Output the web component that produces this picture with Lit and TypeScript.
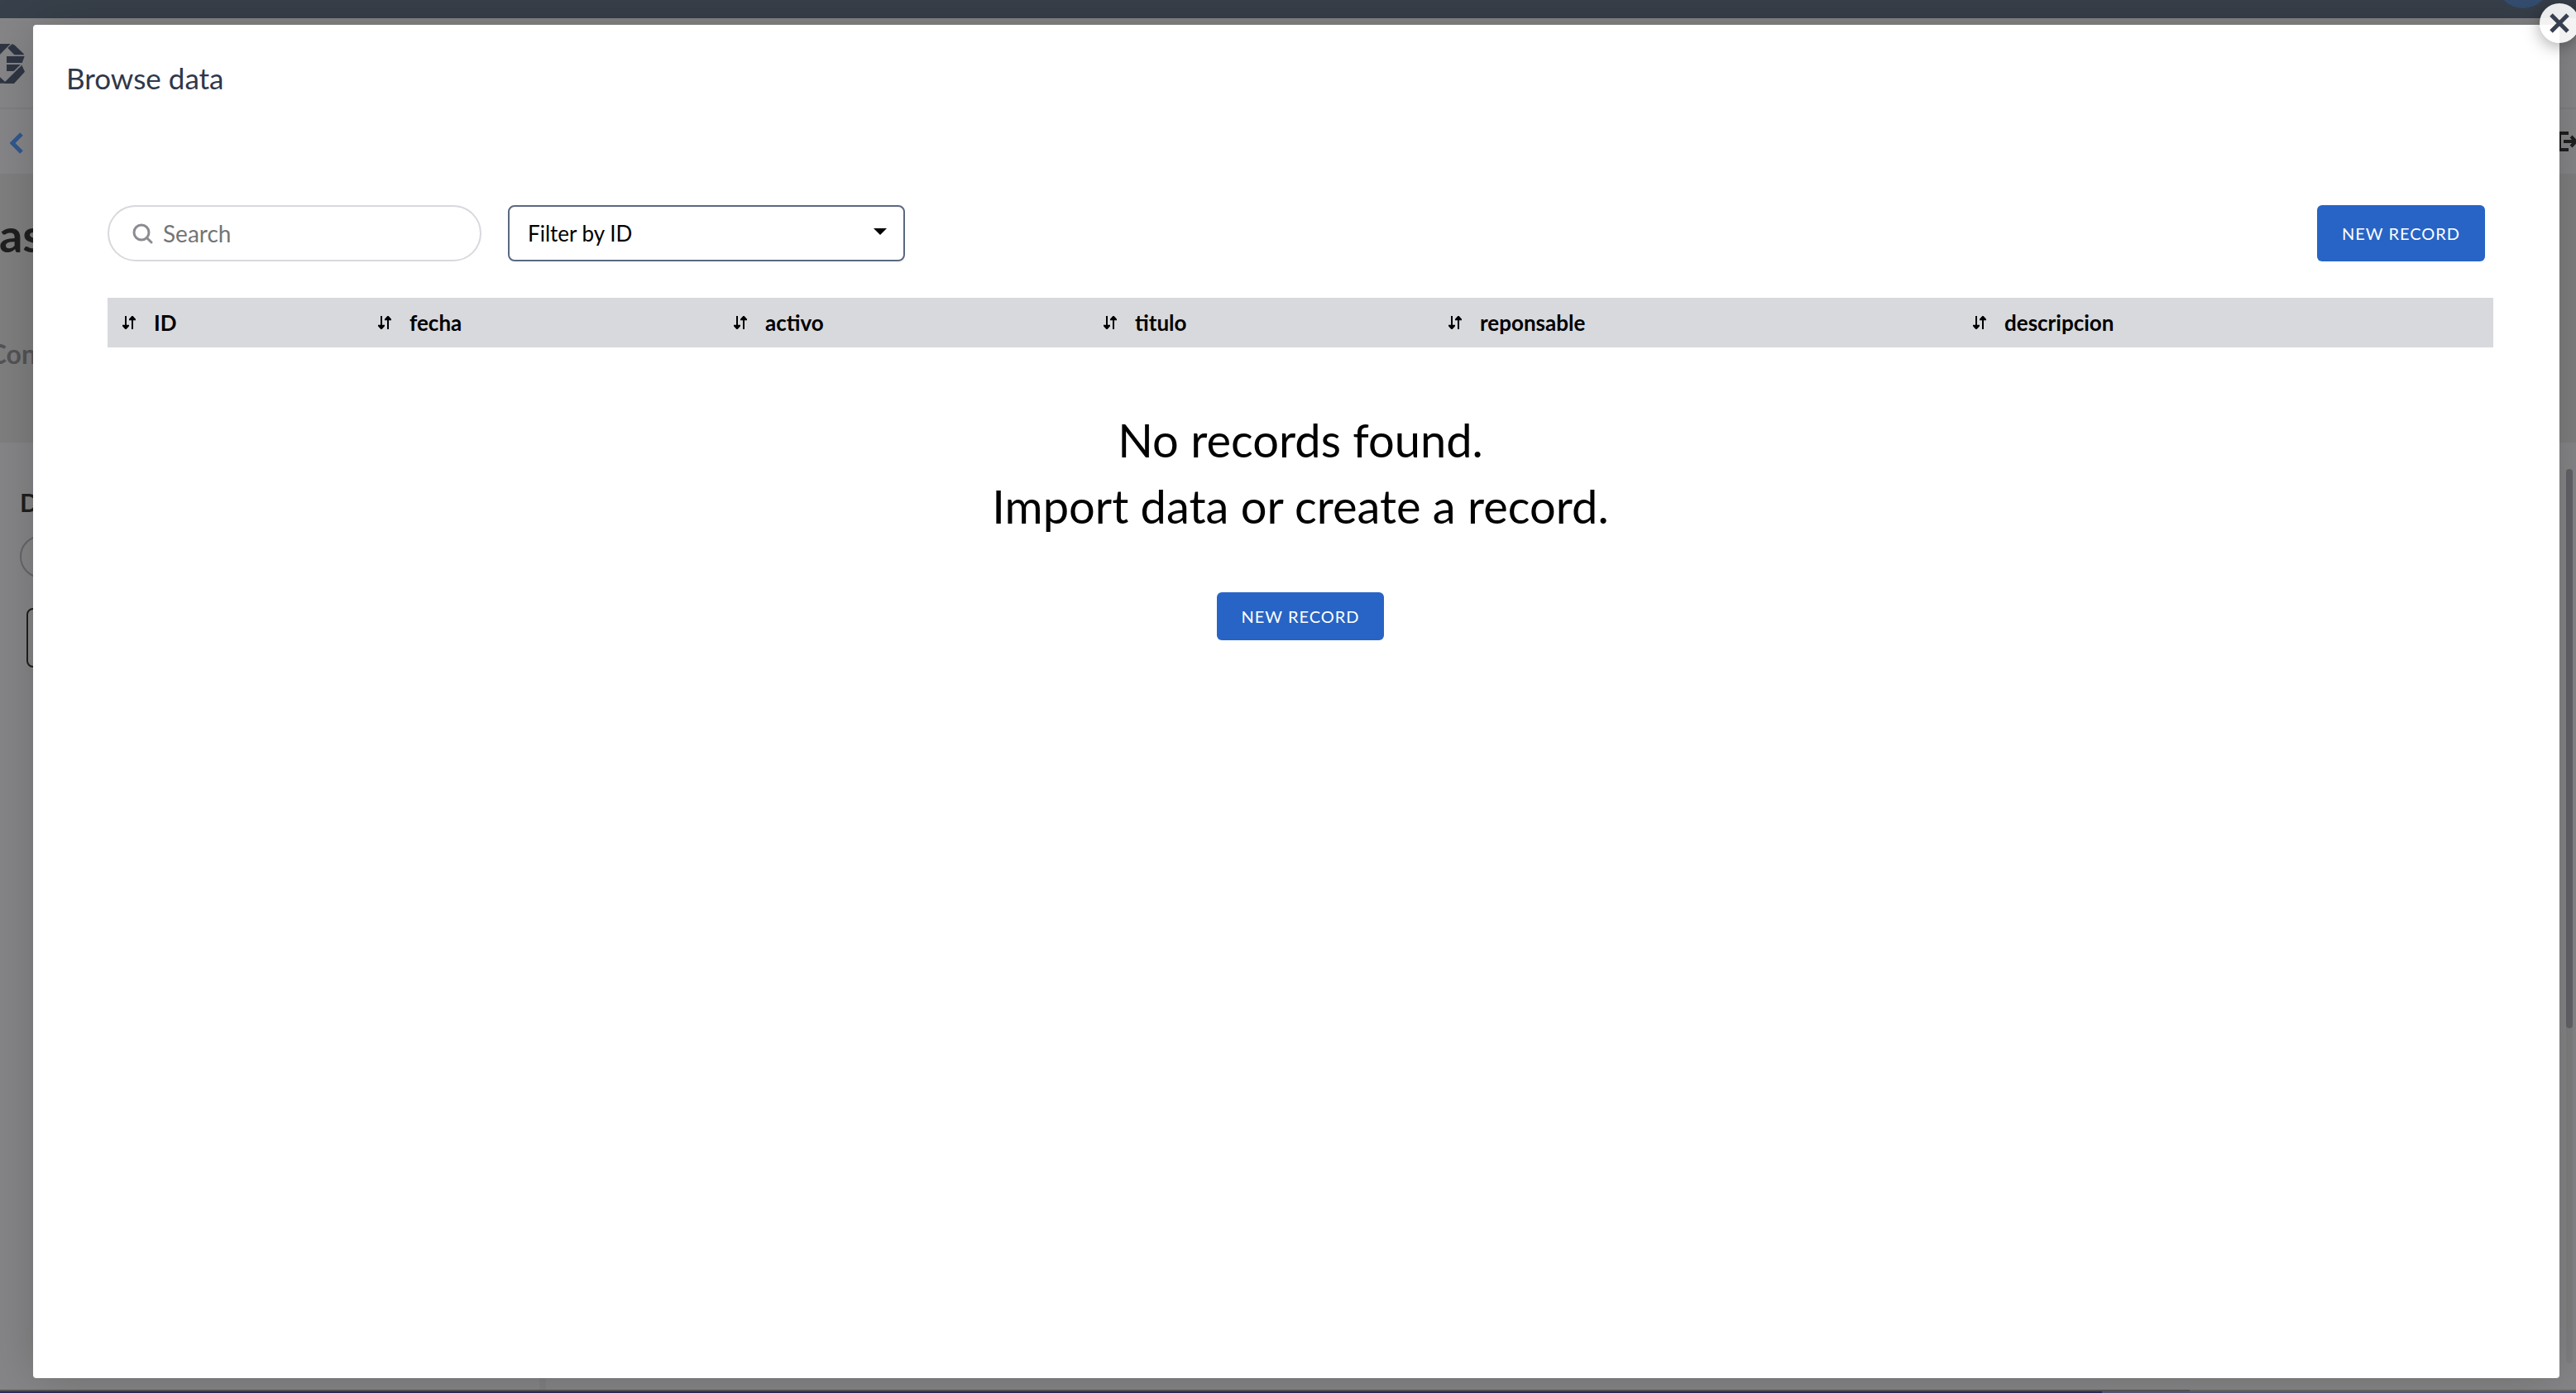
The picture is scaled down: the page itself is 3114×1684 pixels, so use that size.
import { LitElement, html, css } from "lit";
import { customElement } from "lit/decorators.js";

interface Column {
  name: string;
  share: number;
}

const COLUMNS: Column[] = [
  { name: "ID", share: 309 },
  { name: "fecha", share: 430 },
  { name: "activo", share: 447 },
  { name: "titulo", share: 417 },
  { name: "reponsable", share: 634 },
  { name: "descripcion", share: 647 },
];
const TOTAL = COLUMNS.reduce((sum, c) => sum + c.share, 0);

const sortIcon = html`<svg class="sort-icon" viewBox="0 0 48 48" aria-hidden="true">
  <path d="M9 0h6v32h9v5L14 48h-4L0 37v-5h9z" />
  <path d="M34 0h4l10 11v5h-9v32h-6V16h-9v-5z" />
</svg>`;

/* The page that lies dimmed behind the dialog. */
@customElement("page-backdrop")
export class PageBackdrop extends LitElement {
  static styles = css`
    :host {
      display: flex;
      flex-direction: column;
      height: 100%;
      background: #868688;
      color: #1f1f20;
      font-family: Lato, "Open Sans", sans-serif;
      overflow: hidden;
    }
    svg {
      display: block;
    }
    .topbar {
      flex: none;
      display: flex;
      justify-content: flex-end;
      height: 22px;
      padding-right: 32px;
      background: #38404b;
      overflow: hidden;
    }
    .avatar {
      width: 64px;
      height: 64px;
      margin-top: -54px;
      border-radius: 50%;
      background: #354f72;
    }
    .brand {
      flex: none;
      box-sizing: border-box;
      height: 110px;
      padding-top: 30px;
      border-bottom: 2px solid #7f7f80;
    }
    .logo {
      width: 30px;
      height: 50px;
      fill: #2f3643;
    }
    .crumbs {
      flex: none;
      display: flex;
      align-items: center;
      justify-content: space-between;
      height: 78px;
      padding-left: 12px;
      box-sizing: border-box;
    }
    .back {
      width: 16px;
      height: 30px;
      fill: none;
      stroke: #31588f;
      stroke-width: 5;
    }
    .export {
      width: 24px;
      height: 26px;
      fill: none;
      stroke: #1f1f20;
      stroke-width: 4;
    }
    .hero {
      flex: none;
      box-sizing: border-box;
      height: 325px;
      padding-top: 42px;
      background: #7f7f80;
    }
    .name,
    .tab {
      display: flex;
      justify-content: flex-end;
      white-space: nowrap;
    }
    .name {
      width: 52px;
      font-size: 56px;
      line-height: 64px;
      font-weight: 700;
    }
    .tab {
      width: 44px;
      margin-top: 92px;
      font-size: 32px;
      line-height: 40px;
      font-weight: 700;
      color: #545457;
    }
    .body {
      flex: 1;
      display: flex;
      justify-content: space-between;
      min-height: 0;
    }
    .side {
      width: 660px;
      padding: 52px 0 0 24px;
      box-sizing: border-box;
      border-right: 8px solid #818182;
    }
    .heading {
      font-size: 30px;
      line-height: 40px;
      font-weight: 700;
    }
    .pill {
      width: 400px;
      height: 48px;
      margin-top: 20px;
      border: 2px solid #66666b;
      border-radius: 26px;
    }
    .box {
      width: 400px;
      height: 68px;
      margin: 36px 0 0 8px;
      border: 2px solid #1f1f20;
      border-radius: 8px;
    }
    .track {
      width: 8px;
      margin: 32px 4px 32px 0;
      border-radius: 4px;
      background: #808082;
    }
    .thumb {
      height: 62.5%;
      border-radius: 4px;
      background: #636369;
    }
    .edge {
      flex: none;
      height: 2px;
      background: #6a6a66;
    }
    .edge.low {
      background: #5a577d;
    }
    .edge-fill {
      width: 85%;
      height: 100%;
      background: #565658;
    }
    .edge.low .edge-fill {
      width: 81.6%;
      background: #2f2a5c;
    }
  `;

  render() {
    return html`
      <div class="topbar"><div class="avatar"></div></div>
      <div class="brand">
        <svg class="logo" viewBox="0 156 90 150">
          <path d="M0 159h38L0 197z" />
          <path d="M40 163l4-3 8 3 36 34-3 2H52L28 174z" />
          <path d="M24 204h65l-9 24H24z" />
          <path d="M24 234h50l-24 24H24z" />
          <path d="M79 236l11 24-39 43H12z" />
          <path d="M0 280l19 17-7 5H0z" />
        </svg>
      </div>
      <div class="crumbs">
        <svg class="back" viewBox="0 0 16 30"><path d="M14 6L3 17l11 11" /></svg>
        <svg class="export" viewBox="0 0 24 26">
          <path d="M15 3H4v20h11M9 13h16M18 7l6 6-6 6" />
        </svg>
      </div>
      <div class="hero">
        <div class="name">as</div>
        <div class="tab">Con</div>
      </div>
      <div class="body">
        <div class="side">
          <div class="heading">D</div>
          <div class="pill"></div>
          <div class="box"></div>
        </div>
        <div class="track"><div class="thumb"></div></div>
      </div>
      <div class="edge"><div class="edge-fill"></div></div>
      <div class="edge low"><div class="edge-fill"></div></div>
    `;
  }
}

@customElement("browse-dialog")
export class BrowseDialog extends LitElement {
  static styles = css`
    :host {
      display: block;
      position: relative;
      box-sizing: border-box;
      height: 100%;
      padding: 32px 80px 40px 90px;
      background: #fff;
      border-radius: 4px;
      box-shadow: 0 0 60px rgba(0, 0, 0, 0.2);
      color: #000;
      font-family: Lato, "Open Sans", sans-serif;
    }
    svg {
      display: block;
    }
    button,
    input,
    select {
      font-family: inherit;
      margin: 0;
    }
    .title {
      margin: 0 0 0 -50px;
      font-size: 35px;
      line-height: 64px;
      font-weight: 400;
      color: #30384a;
    }
    .close {
      position: absolute;
      top: -26px;
      right: -24px;
      display: flex;
      align-items: center;
      justify-content: center;
      width: 48px;
      height: 48px;
      padding: 0;
      border: 0;
      border-radius: 50%;
      background: rgba(255, 255, 255, 0.9);
      box-shadow: 0 4px 20px rgba(0, 0, 0, 0.35);
    }
    .close svg {
      width: 24px;
      height: 24px;
      stroke: #384050;
      stroke-width: 5;
    }
    .toolbar {
      display: flex;
      align-items: stretch;
      gap: 32px;
      height: 68px;
      margin-top: 122px;
      padding-right: 10px;
    }
    .search {
      display: flex;
      align-items: center;
      gap: 12px;
      box-sizing: border-box;
      width: 452px;
      padding: 0 28px;
      border: 2px solid #d8d9dd;
      border-radius: 34px;
    }
    .search svg {
      flex: none;
      width: 25px;
      height: 25px;
      fill: none;
      stroke: #8b8c92;
      stroke-width: 3;
      stroke-linecap: round;
    }
    .search input {
      flex: 1;
      min-width: 0;
      padding: 0;
      border: 0;
      outline: 0;
      background: none;
      font-size: 28px;
      line-height: 32px;
    }
    .search input::placeholder {
      color: #757575;
      opacity: 1;
    }
    .filter {
      position: relative;
      width: 480px;
    }
    .filter select {
      appearance: none;
      width: 100%;
      height: 100%;
      padding: 0 48px 0 22px;
      border: 2px solid #5b6880;
      border-radius: 8px;
      background: #fff;
      color: #000;
      font-size: 26px;
    }
    .filter svg {
      position: absolute;
      top: 28px;
      right: 22px;
      width: 16px;
      height: 8px;
      pointer-events: none;
    }
    .primary {
      height: 58px;
      padding: 0 30px;
      border: 0;
      border-radius: 6px;
      background: #2764c5;
      color: #fff;
      font-size: 20px;
      letter-spacing: 1px;
    }
    .toolbar .primary {
      height: auto;
      margin-left: auto;
    }
    table {
      width: 100%;
      margin-top: 44px;
      border-collapse: collapse;
      table-layout: fixed;
      background: #d8d9dd;
    }
    th {
      box-sizing: border-box;
      height: 60px;
      padding: 0 18px;
      text-align: left;
    }
    .sort {
      display: flex;
      align-items: center;
      gap: 22px;
      padding: 0;
      border: 0;
      background: none;
      color: #000;
      font-size: 26px;
      line-height: 32px;
      font-weight: 700;
    }
    .sort-icon {
      width: 16px;
      height: 16px;
    }
    .empty {
      display: flex;
      flex-direction: column;
      align-items: center;
      padding-top: 72px;
    }
    .message {
      margin: 0 0 64px;
      font-size: 56px;
      line-height: 80px;
      text-align: center;
    }
  `;

  render() {
    return html`
      <h1 class="title">Browse data</h1>
      <button class="close" aria-label="Close">
        <svg viewBox="0 0 24 24"><path d="M2 2l20 20M22 2L2 22" /></svg>
      </button>
      <div class="toolbar">
        <label class="search">
          <svg viewBox="0 0 25 25" aria-hidden="true">
            <circle cx="11" cy="11" r="9" />
            <path d="M18 18l5 5" />
          </svg>
          <input type="search" placeholder="Search" aria-label="Search" />
        </label>
        <div class="filter">
          <select aria-label="Filter">
            <option>Filter by ID</option>
          </select>
          <svg viewBox="0 0 16 8" aria-hidden="true"><path d="M0 0h16L8 8z" /></svg>
        </div>
        <button class="primary">NEW RECORD</button>
      </div>
      <table>
        <thead>
          <tr>
            ${COLUMNS.map(
              (c) => html`<th scope="col" style="width:${(c.share / TOTAL) * 100}%">
                <button class="sort">${sortIcon}<span>${c.name}</span></button>
              </th>`
            )}
          </tr>
        </thead>
      </table>
      <div class="empty">
        <p class="message">No records found.<br />Import data or create a record.</p>
        <button class="primary">NEW RECORD</button>
      </div>
    `;
  }
}

@customElement("app-root")
export class AppRoot extends LitElement {
  static styles = css`
    :host {
      display: block;
      position: relative;
      height: 100vh;
      overflow: hidden;
    }
    .overlay {
      position: absolute;
      inset: 0;
      box-sizing: border-box;
      padding: 30px 20px 18px 40px;
    }
  `;

  render() {
    return html`
      <page-backdrop aria-hidden="true"></page-backdrop>
      <div class="overlay">
        <browse-dialog role="dialog" aria-label="Browse data"></browse-dialog>
      </div>
    `;
  }
}
